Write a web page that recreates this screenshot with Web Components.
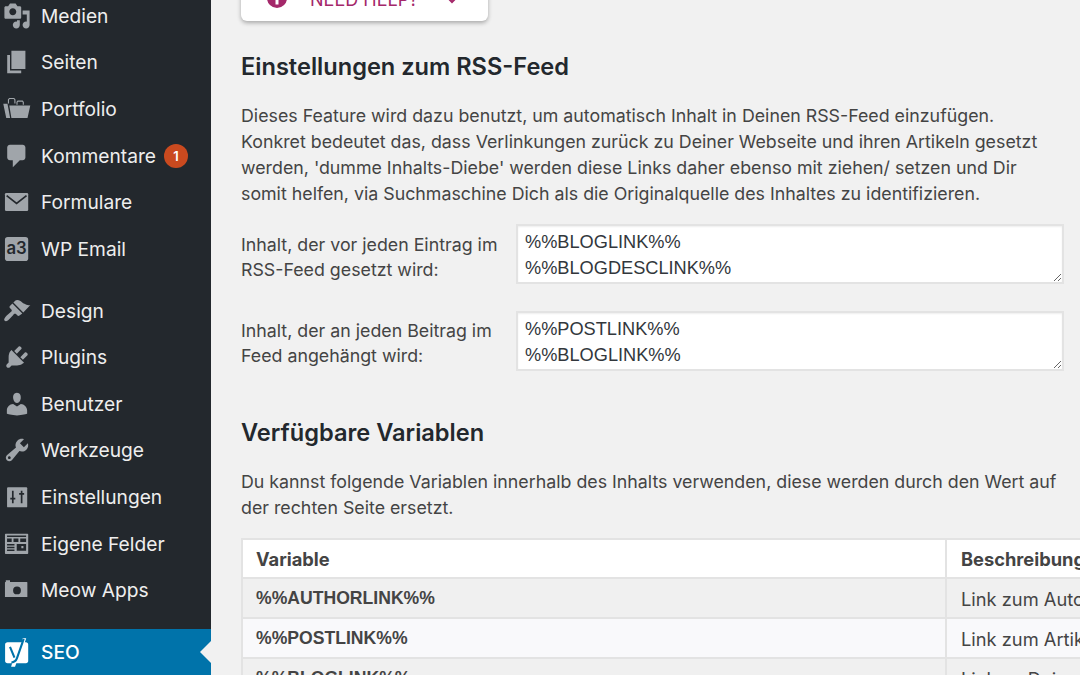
<!DOCTYPE html>
<html lang="de">
<head>
<meta charset="utf-8">
<title>SEO RSS</title>
<style>
	html, body { margin: 0; height: 100%; overflow: hidden; background: #f1f1f1; }
	body { display: flex; height: 675px; font-family: Inter, "Liberation Sans", sans-serif; color: #23282d; }
</style>
</head>
<body>
<wp-sidebar>
	<menu-item label="Medien"><svg slot="icon" viewBox="0 0 20 20"><path d="M13 11V4c0-.55-.45-1-1-1h-1.67L9 1H5L3.67 3H2c-.55 0-1 .45-1 1v7c0 .55.45 1 1 1h10c.55 0 1-.45 1-1zM7 4.500c1.380 0 2.500 1.120 2.500 2.500S8.380 9.500 7 9.500 4.500 8.380 4.500 7 5.620 4.500 7 4.500zM14 6h5v10.500c0 1.380-1.120 2.500-2.500 2.500S14 17.880 14 16.500s1.120-2.500 2.500-2.500c.17 0 .34.020.5.050V9h-3V6zm-4 8.050V13h2v3.500c0 1.380-1.120 2.500-2.500 2.500S7 17.880 7 16.500 8.120 14 9.500 14c.17 0 .34.020.5.050z" fill-rule="evenodd"/></svg></menu-item>
	<menu-item label="Seiten"><svg slot="icon" viewBox="0 0 20 20"><path d="M6 15V2h10v13H6zm-1 1h8v2H3V5h2v11z"/></svg></menu-item>
	<menu-item label="Portfolio"><svg slot="icon" viewBox="0 0 20 20"><path d="M.2 6.300h3l1.900 10.200H2.300zM4.500 7.500h15l-2 9H6z"/><path d="M3.900 6V3.400l.7-.9h3.200l.7.9V6M10 7V5.200l.6-.8h3.300l.6.8V7" fill="none" stroke="#a0a5aa" stroke-width=".8"/></svg></menu-item>
	<menu-item label="Kommentare" badge="1"><svg slot="icon" viewBox="0 0 20 20"><path d="M5 2h9c1.100 0 2 .9 2 2v7c0 1.100-.9 2-2 2h-2l-5 5v-5H5c-1.100 0-2-.9-2-2V4c0-1.100.9-2 2-2z"/></svg></menu-item>
	<menu-item label="Formulare"><svg slot="icon" viewBox="0 0 20 20"><rect x="1.400" y="3.500" width="16.600" height="13" rx=".9"/><path d="M2.600 5.400 9.700 11l7.100-5.600" fill="none" stroke="#23282d" stroke-width="1.200"/></svg></menu-item>
	<menu-item label="WP Email" gap-after><svg slot="icon" viewBox="0 0 20 20"><rect x="1.400" y="1.400" width="16.600" height="17.200" rx="2"/><text x="9.700" y="13.600" text-anchor="middle" font-family="Inter, sans-serif" font-size="12" font-weight="600" fill="#23282d">a3</text></svg></menu-item>
	<menu-item label="Design"><svg slot="icon" viewBox="0 0 20 20"><path d="M14.480 11.060L7.410 3.990l1.500-1.500c.5-.56 2.300-.47 3.510.32 1.210.8 1.430 1.280 2.910 2.100 1.180.64 2.450 1.260 4.230.85zm-.71.71L6.700 4.700 4.930 6.470c-.39.39-.39 1.020 0 1.410l1.060 1.060c.39.390.39 1.030 0 1.420-.6.600-6.600 4.870-4.800 6.670 1.800 1.800 6.070-4.200 6.670-4.800.39-.39 1.030-.39 1.420 0l1.060 1.060c.39.39 1.020.39 1.410 0z"/></svg></menu-item>
	<menu-item label="Plugins"><svg slot="icon" viewBox="0 0 20 20"><path d="M13.110 4.360L9.870 7.600 8 5.730l3.240-3.240c.35-.34 1.050-.2 1.560.32.520.510.660 1.210.310 1.550zm-8 1.770l.91-1.120 9.010 9.010-1.190.84c-.71.710-2.630 1.160-3.820 1.160H6.140L4.900 17.260c-.59.590-1.540.59-2.120 0-.59-.580-.59-1.530 0-2.120l1.240-1.240v-3.880c0-1.130.4-3.190 1.090-3.890zm7.260 3.970l3.240-3.240c.34-.350 1.040-.210 1.550.310.520.510.660 1.210.310 1.550l-3.240 3.250z"/></svg></menu-item>
	<menu-item label="Benutzer"><svg slot="icon" viewBox="0 0 20 20"><path d="M10 9.250c-2.270 0-2.730-3.440-2.730-3.440C7 4.020 7.820 2 9.970 2c2.160 0 2.980 2.020 2.710 3.810 0 0-.41 3.440-2.680 3.440zm0 2.570L12.720 10c2.390 0 4.520 2.330 4.520 4.530v2.490s-3.650 1.130-7.240 1.130c-3.650 0-7.240-1.130-7.240-1.130v-2.490c0-2.250 1.940-4.480 4.470-4.480z"/></svg></menu-item>
	<menu-item label="Werkzeuge"><svg slot="icon" viewBox="0 0 20 20"><path fill-rule="evenodd" d="M16.680 9.770c-1.340 1.340-3.300 1.670-4.950.99l-5.410 6.520c-.99.990-2.590.990-3.570 0-.99-.980-.99-2.580 0-3.570l6.520-5.420c-.68-1.650-.35-3.610.99-4.950 1.280-1.280 3.120-1.620 4.720-1.060l-2.890 2.890 2.820 2.820 2.860-2.870c.53 1.580.18 3.390-1.090 4.650zM3.810 16.210c.4.390 1.030.39 1.420 0 .4-.4.400-1.030 0-1.430-.39-.39-1.020-.39-1.420 0-.39.400-.39 1.030 0 1.430z"/></svg></menu-item>
	<menu-item label="Einstellungen"><svg slot="icon" viewBox="0 0 20 20"><rect x="2.900" y="3" width="14.400" height="14.400" rx=".7"/><path d="M7 5.500v9M13.300 5.500v9M5.200 11.200h3.600M11.500 7.800h3.600" stroke="#23282d" stroke-width="1.200" fill="none"/></svg></menu-item>
	<menu-item label="Eigene Felder"><svg slot="icon" viewBox="0 0 20 20"><path fill-rule="evenodd" d="M1.900 2.700h15.600c.3 0 .5.200.5.500v13.400c0 .3-.2.500-.5.500H1.900c-.3 0-.5-.2-.5-.5V3.200c0-.3.200-.5.500-.5zM2.900 4v1h13.600V4zm0 2v2.500h3.300V6zm4.600 0v2.500h3.500V6zm4.800 0v2.500h4.200V6zM2.900 10v1h5.300v-1zm0 2v1h5.300v-1zm0 2v1h5.300v-1zm6.900-4v4.800h6.700V10zm3.300 1.500h1.500V13h-1.500z"/></svg></menu-item>
	<menu-item label="Meow Apps" gap-after><svg slot="icon" viewBox="0 0 20 20"><path fill-rule="evenodd" d="M2 3h3v1.200h12c.3 0 .4.200.4.400V15H1.400V4.600c0-.2.100-.4.300-.4H2zM10 7.500a2.800 2.800 0 1 0 0 5.600 2.800 2.800 0 0 0 0-5.600z"/></svg></menu-item>
	<menu-item label="SEO" current><svg slot="icon" viewBox="0 0 20 20"><path fill="#fff" d="M3.200 3h10.800L14 .2h2.600L15.600 3h.8c.9 0 1.600.7 1.600 1.600v11.800c0 .9-.7 1.600-1.600 1.600H9.500L8.600 20.600H5.800l.7-2.600H3.200c-.9 0-1.700-.7-1.700-1.600V4.600C1.500 3.700 2.300 3 3.200 3z"/><path fill="none" stroke="#0073aa" stroke-width="1.500" d="M5 6.300 8.200 14M14.800 .6 10 14.400c-.7 2-1.800 2.900-4 3.100"/></svg></menu-item>
</wp-sidebar>

<main-column>
	<help-tab>Need help?</help-tab>
	<section-title>Einstellungen zum RSS-Feed</section-title>
	<body-text>Dieses Feature wird dazu benutzt, um automatisch Inhalt in Deinen RSS-Feed einzufügen.<br>Konkret bedeutet das, dass Verlinkungen zurück zu Deiner Webseite und ihren Artikeln gesetzt<br>werden, 'dumme Inhalts-Diebe' werden diese Links daher ebenso mit ziehen/ setzen und Dir<br>somit helfen, via Suchmaschine Dich als die Originalquelle des Inhaltes zu identifizieren.</body-text>
	<text-field value="%%BLOGLINK%%&#10;%%BLOGDESCLINK%%">Inhalt, der vor jeden Eintrag im<br>RSS-Feed gesetzt wird:</text-field>
	<text-field second value="%%POSTLINK%%&#10;%%BLOGLINK%%">Inhalt, der an jeden Beitrag im<br>Feed angehängt wird:</text-field>
	<section-title second>Verfügbare Variablen</section-title>
	<body-text>Du kannst folgende Variablen innerhalb des Inhalts verwenden, diese werden durch den Wert auf<br>der rechten Seite ersetzt.</body-text>
	<var-table>
		<var-row head name="Variable" desc="Beschreibung"></var-row>
		<var-row name="%%AUTHORLINK%%" desc="Link zum Autor"></var-row>
		<var-row light name="%%POSTLINK%%" desc="Link zum Artikel"></var-row>
		<var-row name="%%BLOGLINK%%" desc="Link zu Deiner"></var-row>
	</var-table>
</main-column>

<script>
class WpSidebar extends HTMLElement {
	constructor() {
		super();
		this.attachShadow({ mode: "open" }).innerHTML = `
		<style>
			:host { display: block; flex: 0 0 211px; height: 675px; background: #23282d; overflow: hidden; }
			.list { display: flex; flex-direction: column; margin-top: -7.5px; }
		</style>
		<div class="list"><slot></slot></div>`;
	}
}

class MenuItem extends HTMLElement {
	constructor() {
		super();
		const label = this.getAttribute("label");
		const badge = this.getAttribute("badge");
		this.attachShadow({ mode: "open" }).innerHTML = `
		<style>
			:host { display: flex; align-items: center; height: 46.6px; flex: none; color: #eee; font-size: 19.2px; font-weight: 400; position: relative; }
			:host([gap-after]) { margin-bottom: 15.2px; }
			:host([current]) { background: #0073aa; color: #fff; height: 47px; font-weight: 500; }
			:host([current])::after { content: ""; position: absolute; right: 0; top: 50%; margin-top: -11px; border: 11px solid transparent; border-right-color: #f1f1f1; border-left-width: 0; }
			.icon { flex: 0 0 41px; display: flex; padding-left: 3px; box-sizing: border-box; fill: #a0a5aa; }
			:host([current]) .icon { fill: #fff; }
			::slotted(svg) { width: 28px; height: 28px; display: block; overflow: visible; }
			.badge { display: inline-flex; align-items: center; justify-content: center; width: 24px; height: 24px; margin-left: 8px; border-radius: 50%; background: #ca4a1f; color: #fff; font-size: 13px; font-weight: 600; }
		</style>
		<span class="icon"><slot name="icon"></slot></span>
		<span>${label}</span>
		${badge ? `<span class="badge">${badge}</span>` : ""}`;
	}
}

class MainColumn extends HTMLElement {
	constructor() {
		super();
		this.attachShadow({ mode: "open" }).innerHTML = `
		<style>
			:host { display: flex; flex-direction: column; flex: 1; min-width: 0; padding-left: 30px; height: 675px; overflow: hidden; box-sizing: border-box; }
		</style>
		<slot></slot>`;
	}
}

class HelpTab extends HTMLElement {
	constructor() {
		super();
		this.attachShadow({ mode: "open" }).innerHTML = `
		<style>
			:host { display: flex; flex: none; align-items: flex-end; width: 247px; height: 60px; margin-top: -39px; background: #fff; border-radius: 0 0 6px 6px; box-shadow: 0 2px 4px rgba(0,0,0,.3); color: #a4286a; box-sizing: border-box; padding: 0 30px 13px 26px; font-size: 18px; line-height: 22px; text-transform: uppercase; }
			.info { flex: none; width: 20px; height: 20px; margin-right: 23px; fill: #a4286a; }
			span { flex: 1; white-space: nowrap; margin-bottom: -2.5px; }
			.chev { flex: none; width: 12px; height: 8px; margin-bottom: 4px; fill: none; stroke: #a4286a; stroke-width: 2; }
		</style>
		<svg class="info" viewBox="0 0 20 20"><path fill-rule="evenodd" d="M10 0a10 10 0 1 0 0 20 10 10 0 0 0 0-20zM8.500 3.500h3v3h-3zm0 5h3v8h-3z"/></svg>
		<span><slot></slot></span>
		<svg class="chev" viewBox="0 0 12 8"><path d="M1 1l5 5 5-5"/></svg>`;
	}
}

class SectionTitle extends HTMLElement {
	constructor() {
		super();
		this.attachShadow({ mode: "open" }).innerHTML = `
		<style>
			:host { display: block; flex: none; margin-top: 31px; font-size: 23.6px; line-height: 30px; font-weight: 600; color: #23282d; white-space: nowrap; }
			:host([second]) { margin-top: 47px; }
		</style>
		<slot></slot>`;
	}
}

class BodyText extends HTMLElement {
	constructor() {
		super();
		this.attachShadow({ mode: "open" }).innerHTML = `
		<style>
			:host { display: block; flex: none; margin-top: 21px; font-size: 17.8px; line-height: 26px; color: #444; white-space: nowrap; }
		</style>
		<slot></slot>`;
	}
}

class TextField extends HTMLElement {
	constructor() {
		super();
		this.attachShadow({ mode: "open" }).innerHTML = `
		<style>
			:host { display: flex; flex: none; margin-top: 17px; margin-right: 16px; height: 60px; font-size: 17.8px; line-height: 25px; color: #444; }
			:host([second]) { margin-top: 27px; }
			.label { flex: 0 0 275px; padding-top: 8px; white-space: nowrap; }
			:host([second]) .label { padding-top: 7px; }
			textarea { flex: 1; margin: 0; box-sizing: border-box; height: 60px; border: 2px solid #e3e3e3; background: #fff; padding: 3px 7px; font-family: "Liberation Sans", sans-serif; font-size: 18.2px; line-height: 26px; color: #32373c; box-shadow: inset 0 1px 2px rgba(0,0,0,.07); outline: 0; overflow: hidden; white-space: pre; }
		</style>
		<div class="label"><slot></slot></div>
		<textarea spellcheck="false"></textarea>`;
		this.shadowRoot.querySelector("textarea").textContent = this.getAttribute("value");
	}
}

class VarTable extends HTMLElement {
	constructor() {
		super();
		this.attachShadow({ mode: "open" }).innerHTML = `
		<style>
			:host { display: block; flex: none; width: 960px; margin-top: 17px; border: 2px solid #e3e3e3; border-bottom: 0; box-sizing: border-box; }
		</style>
		<slot></slot>`;
	}
}

class VarRow extends HTMLElement {
	constructor() {
		super();
		this.attachShadow({ mode: "open" }).innerHTML = `
		<style>
			:host { display: grid; grid-template-columns: 704px 1fr; height: 40px; background: #f0f0f0; border-bottom: 2px solid #e3e3e3; box-sizing: border-box; font-size: 18.3px; color: #444; white-space: nowrap; }
			:host([head]) { background: #fff; height: 39px; font-weight: 700; }
			:host([light]) { background: #f9f9fb; }
			div { display: flex; align-items: center; padding-left: 13px; }
			.name { font-weight: 700; border-right: 2px solid #e3e3e3; padding-top: 1px; }
			:host(:not([head])) .name { font-family: "Liberation Sans", sans-serif; font-size: 17.6px; }
			.desc { padding-left: 14px; padding-top: 1px; }
		</style>
		<div class="name">${this.getAttribute("name")}</div>
		<div class="desc">${this.getAttribute("desc")}</div>`;
	}
}

customElements.define("wp-sidebar", WpSidebar);
customElements.define("menu-item", MenuItem);
customElements.define("main-column", MainColumn);
customElements.define("help-tab", HelpTab);
customElements.define("section-title", SectionTitle);
customElements.define("body-text", BodyText);
customElements.define("text-field", TextField);
customElements.define("var-table", VarTable);
customElements.define("var-row", VarRow);
</script>
</body>
</html>
